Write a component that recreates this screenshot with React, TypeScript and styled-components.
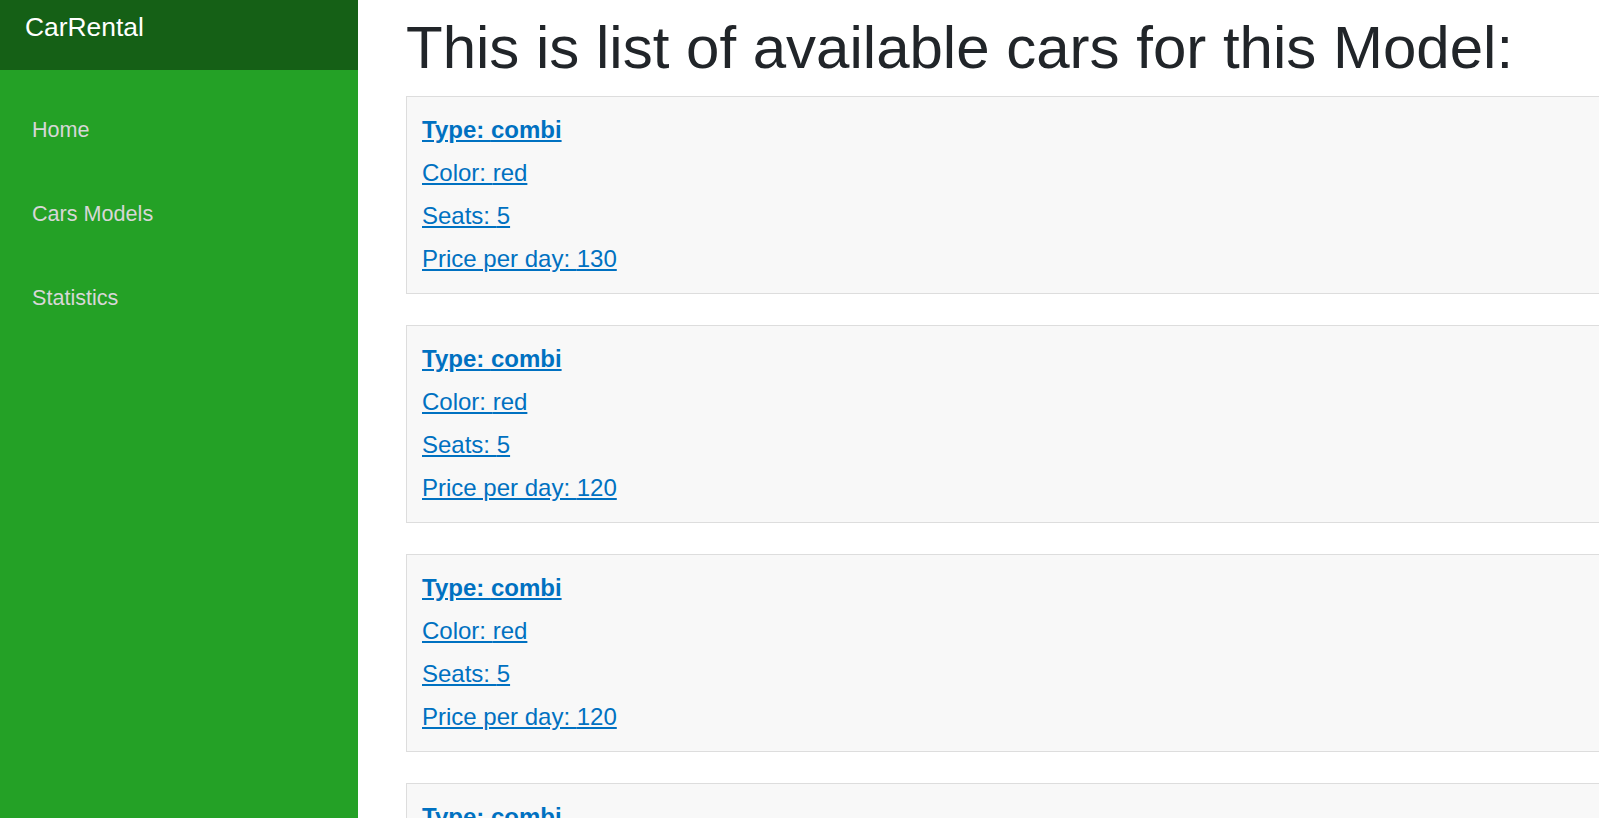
import React from "react";
import styled, { createGlobalStyle } from "styled-components";

const GlobalStyle = createGlobalStyle`
  html, body {
    margin: 0;
    padding: 0;
    overflow: hidden;
    background: #ffffff;
    font-family: "Liberation Sans", Arial, Helvetica, sans-serif;
  }
  * { box-sizing: border-box; }
`;

const Page = styled.div`
  display: flex;
  min-height: 100vh;
  height: 818px;
`;

const Sidebar = styled.aside`
  flex: 0 0 358px;
  width: 358px;
  background: #24a126;
  display: flex;
  flex-direction: column;
`;

const TopRow = styled.div`
  height: 70px;
  background: rgba(0, 0, 0, 0.4);
  padding: 7px 0 0 25px;
`;

const Brand = styled.a`
  display: block;
  color: #ffffff;
  font-size: 26.4px;
  line-height: 40px;
  text-decoration: none;
`;

const Nav = styled.nav`
  display: flex;
  flex-direction: column;
  padding: 24px 0 0 32px;
`;

const NavItem = styled.a`
  display: flex;
  align-items: center;
  height: 72px;
  margin-bottom: 12px;
  color: #d7d7d7;
  font-size: 21.6px;
  text-decoration: none;
`;

const Main = styled.main`
  flex: 1 1 auto;
  min-width: 0;
  padding: 12px 0 0 48px;
`;

const Heading = styled.h1`
  margin: 0 0 12px 0;
  font-size: 60px;
  line-height: 72px;
  font-weight: 400;
  color: #212529;
  white-space: nowrap;
`;

const CardList = styled.div`
  display: flex;
  flex-direction: column;
  gap: 31px;
  width: 1400px;
`;

const Card = styled.div`
  background: #f8f8f8;
  border: 1px solid #dddddd;
  padding: 15px 15px 16px 15px;
  display: flex;
  flex-direction: column;
  gap: 7px;
`;

const CardLink = styled.a<{ $bold?: boolean }>`
  display: block;
  width: max-content;
  color: #0071c1;
  font-size: 24px;
  line-height: 36px;
  font-weight: ${(p) => (p.$bold ? 700 : 400)};
  text-decoration: underline;
`;

const cars = [
  { type: "combi", color: "red", seats: 5, price: 130 },
  { type: "combi", color: "red", seats: 5, price: 120 },
  { type: "combi", color: "red", seats: 5, price: 120 },
  { type: "combi", color: "red", seats: 5, price: 120 },
];

export default function App() {
  return (
    <>
      <GlobalStyle />
      <Page>
        <Sidebar>
          <TopRow>
            <Brand href="#">CarRental</Brand>
          </TopRow>
          <Nav>
            <NavItem href="#">Home</NavItem>
            <NavItem href="#">Cars Models</NavItem>
            <NavItem href="#">Statistics</NavItem>
          </Nav>
        </Sidebar>
        <Main>
          <Heading>This is list of available cars for this Model:</Heading>
          <CardList>
            {cars.map((c, i) => (
              <Card key={i}>
                <CardLink href="#" $bold>
                  Type: {c.type}
                </CardLink>
                <CardLink href="#">Color: {c.color}</CardLink>
                <CardLink href="#">Seats: {c.seats}</CardLink>
                <CardLink href="#">Price per day: {c.price}</CardLink>
              </Card>
            ))}
          </CardList>
        </Main>
      </Page>
    </>
  );
}
